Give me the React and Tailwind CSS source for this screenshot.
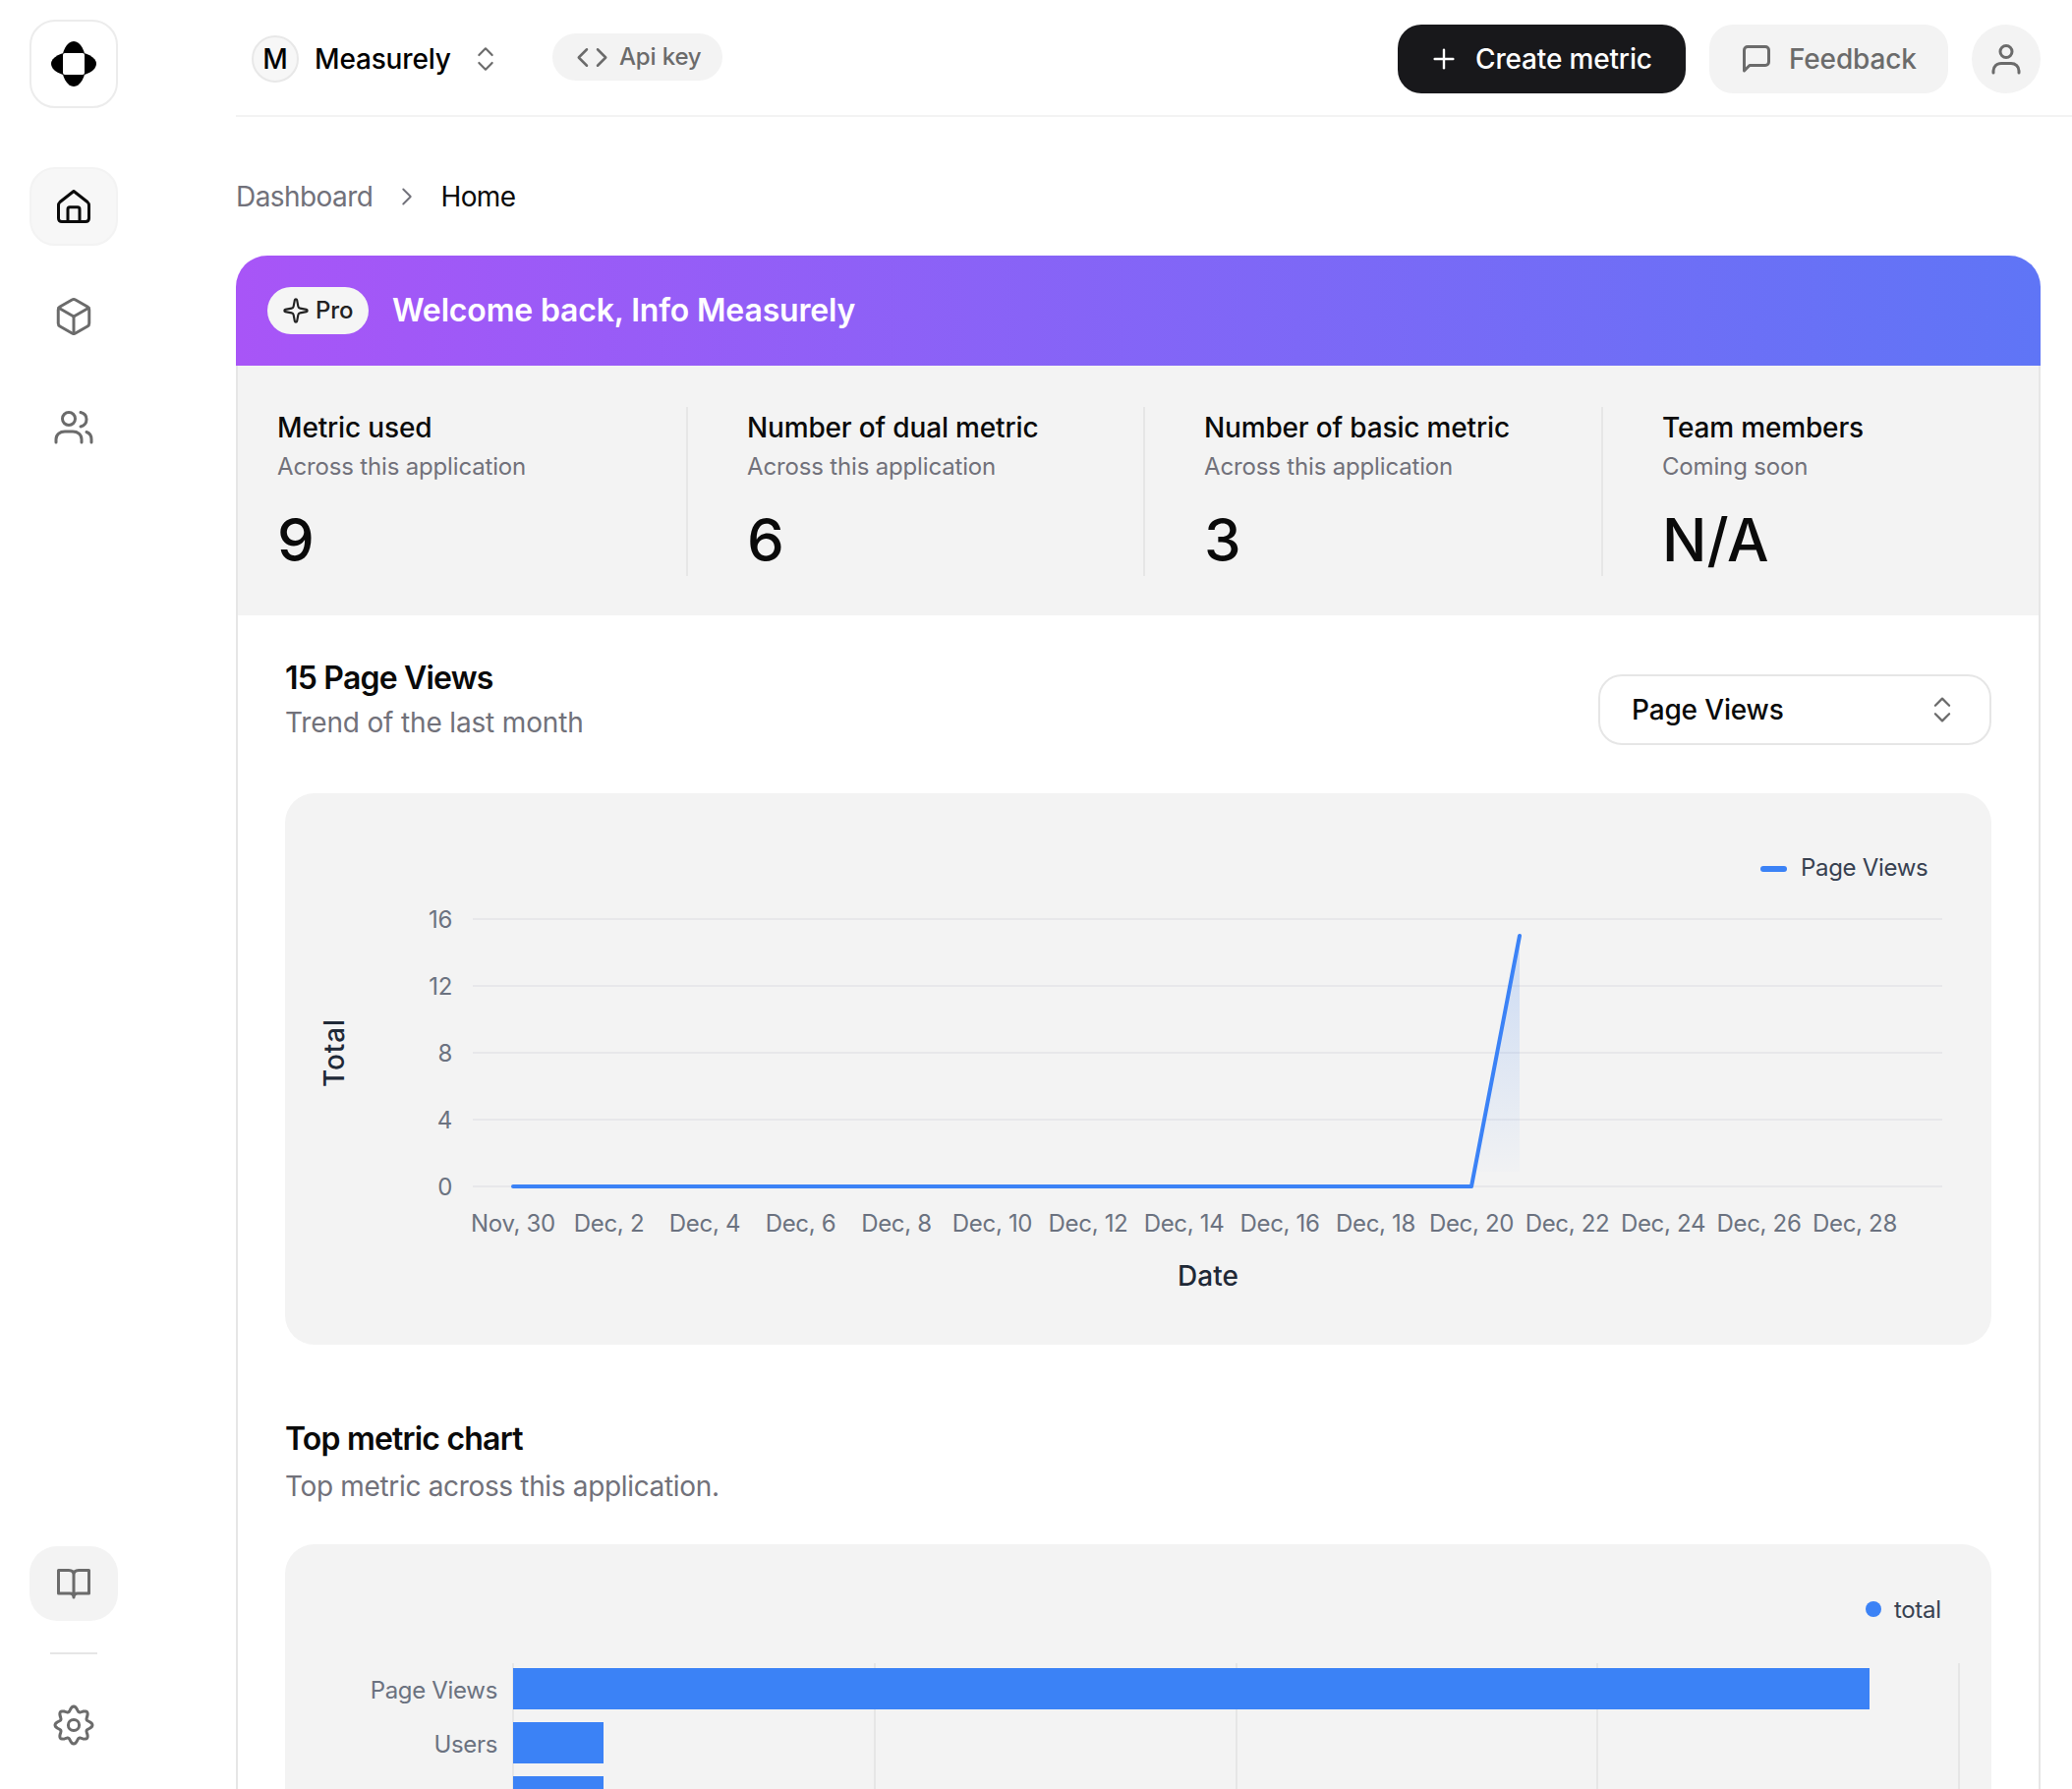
import { Box, ChevronRight, ChevronsUpDown, Code, Plus, Sparkle } from 'lucide-react'

const ticks = ['Nov, 30', 'Dec, 2', 'Dec, 4', 'Dec, 6', 'Dec, 8', 'Dec, 10', 'Dec, 12', 'Dec, 14', 'Dec, 16', 'Dec, 18', 'Dec, 20', 'Dec, 22', 'Dec, 24', 'Dec, 26', 'Dec, 28']
const yTicks = [['16', 128], ['12', 196], ['8', 264], ['4', 332], ['0', 400]]

const stats = [
  { title: 'Metric used', sub: 'Across this application', value: '9', cell: 'pl-[40px] border-r-2' },
  { title: 'Number of dual metric', sub: 'Across this application', value: '6', cell: 'pl-[60px] border-r-2' },
  { title: 'Number of basic metric', sub: 'Across this application', value: '3', cell: 'pl-[60px] border-r-2' },
  { title: 'Team members', sub: 'Coming soon', value: 'N/A', cell: 'pl-[60px]' },
]

// wavy eight-tooth cog outline
const gearPath = Array.from({ length: 145 }, (_, i) => {
  const t = (i / 144) * Math.PI * 2
  const r = 16.6 + 2.4 * Math.cos(8 * t)
  const x = 24 + r * Math.sin(t)
  const y = 24 - r * Math.cos(t)
  return `${i === 0 ? 'M' : 'L'}${x.toFixed(2)} ${y.toFixed(2)}`
}).join(' ')

function Logo() {
  return (
    <svg width="46" height="46" viewBox="0 0 46 46">
      <ellipse cx="23" cy="23" rx="12.5" ry="23" fill="#000" />
      <ellipse cx="23" cy="23" rx="23" ry="12.5" fill="#000" />
      <rect x="12" y="12" width="22" height="22" rx="2" fill="#fff" />
    </svg>
  )
}

function HomeIcon() {
  return (
    <svg width="36" height="36" viewBox="0 0 36 36" fill="none" stroke="currentColor" strokeWidth="3" strokeLinecap="round" strokeLinejoin="round">
      <path d="M18 2.5 L32 13.5 C33 14.4 33.5 15.5 33.5 17 V30 C33.5 32.3 32.3 33.5 30 33.5 H6 C3.7 33.5 2.5 32.3 2.5 30 V17 C2.5 15.5 3 14.4 4 13.5 Z" />
      <path d="M12 33.5 V21 C12 19.6 12.8 18.8 14 18.8 H22 C23.2 18.8 24 19.6 24 21 V33.5" />
    </svg>
  )
}

function TeamIcon() {
  return (
    <svg width="90" height="38" viewBox="0 0 90 38" fill="none" stroke="currentColor" strokeWidth="3" strokeLinecap="round">
      <circle cx="40" cy="11" r="6.5" />
      <path d="M52 4.5 C56 5.5 58 8.5 58 11.5 C58 15 56 18 52 19" />
      <path d="M27 35 V32 C27 27 31 24 36 24 H44 C49 24 53 27 53 32 V35" />
      <path d="M58 24.5 C61 25.5 63 28 63 32 V35" />
    </svg>
  )
}

function DocsIcon() {
  return (
    <svg width="90" height="40" viewBox="0 0 90 40" fill="none" stroke="currentColor" strokeWidth="3" strokeLinecap="round" strokeLinejoin="round">
      <path d="M45 11 C45 8 43 6.5 40 6.5 H29.5 V30 H41 C43.5 30 45 31.5 45 34 C45 31.5 46.5 30 49 30 H60.5 V6.5 H50 C47 6.5 45 8 45 11 V34" />
    </svg>
  )
}

function GearIcon() {
  return (
    <svg width="48" height="48" viewBox="0 0 48 48" fill="none" stroke="currentColor" strokeWidth="3" strokeLinejoin="round">
      <path d={`${gearPath} Z`} />
      <circle cx="24" cy="24" r="5.6" />
    </svg>
  )
}

function FeedbackIcon() {
  return (
    <svg width="28" height="28" viewBox="0 0 28 28" fill="none" stroke="currentColor" strokeWidth="3" strokeLinejoin="round" strokeLinecap="round">
      <path d="M1.5 26 V5 C1.5 3 3 1.5 5 1.5 H23 C25 1.5 26.5 3 26.5 5 V17 C26.5 19 25 20.5 23 20.5 H7 Z" />
    </svg>
  )
}

function UserIcon() {
  return (
    <svg width="30" height="32" viewBox="0 0 30 32" fill="none" stroke="currentColor" strokeWidth="3" strokeLinecap="round">
      <circle cx="15" cy="8.5" r="6" />
      <path d="M2 30 V28 C2 23.5 5.5 20.5 10 20.5 H20 C24.5 20.5 28 23.5 28 28 V30" />
    </svg>
  )
}

function Sidebar() {
  return (
    <aside className="w-[240px] shrink-0 flex flex-col pl-[30px] pt-[20px] pb-[27px]">
      <div className="w-[90px] h-[90px] rounded-[26px] border-2 border-[#ececec] flex items-center justify-center">
        <Logo />
      </div>
      <nav className="mt-[60px] flex flex-col gap-[32px]">
        <div className="w-[90px] h-[80px] rounded-[26px] border-2 border-[#f3f3f3] bg-[#f7f7f7] flex items-center justify-center text-[#0a0a0a]">
          <HomeIcon />
        </div>
        <div className="w-[90px] h-[80px] flex items-center justify-center text-[#6b6b6b]">
          <Box size={42} strokeWidth={1.7} />
        </div>
        <div className="w-[90px] h-[80px] flex items-center justify-center text-[#6b6b6b]">
          <TeamIcon />
        </div>
      </nav>
      <div className="mt-auto flex flex-col">
        <div className="w-[90px] h-[76px] rounded-[28px] bg-[#f3f3f3] flex items-center justify-center text-[#6b6b6b]">
          <DocsIcon />
        </div>
        <div className="w-[48px] h-[2px] bg-[#e6e6e6] ml-[21px] mt-[32px] mb-[34px]" />
        <div className="w-[90px] h-[76px] flex items-center justify-center text-[#6b6b6b]">
          <GearIcon />
        </div>
      </div>
    </aside>
  )
}

function Header() {
  return (
    <header className="h-[119px] shrink-0 border-b-2 border-[#f3f3f3] flex items-start pl-[16px] pr-[32px]">
      <div className="mt-[36px] w-[48px] h-[48px] rounded-full border-2 border-[#e8e8e8] bg-[#f7f7f7] flex items-center justify-center text-[28px] font-medium text-black">M</div>
      <span className="mt-[36px] ml-[16px] w-[138px] leading-[48px] text-[28px] font-medium text-black">Measurely</span>
      <ChevronsUpDown className="mt-[44px] ml-[20px] text-[#6b6b6b]" size={32} strokeWidth={1.6} />
      <div className="mt-[34px] ml-[52px] h-[48px] w-[173px] rounded-full bg-[#f3f3f3] flex items-center pl-[24px] gap-[11px] text-[#6b6b6b]">
        <Code size={33} strokeWidth={1.8} />
        <span className="text-[24px] leading-[32px] font-medium">Api key</span>
      </div>
      <div className="ml-auto mt-[25px] flex gap-[24px]">
        <div className="w-[293px] h-[70px] rounded-[24px] bg-[#18181b] text-white flex items-center pl-[31px] gap-[16px]">
          <Plus size={32} strokeWidth={1.8} />
          <span className="text-[28px] font-medium">Create metric</span>
        </div>
        <div className="w-[243px] h-[70px] rounded-[24px] bg-[#f3f3f3] text-[#6b6b6b] flex items-center pl-[34px] gap-[19px]">
          <FeedbackIcon />
          <span className="text-[28px] font-medium">Feedback</span>
        </div>
        <div className="w-[70px] h-[70px] rounded-full bg-[#f3f3f3] text-[#6b6b6b] flex items-center justify-center">
          <UserIcon />
        </div>
      </div>
    </header>
  )
}

function Stats() {
  return (
    <div className="h-[254px] bg-[#f3f3f3] pt-[42px] grid grid-cols-[458px_465px_466px_1fr]">
      {stats.map((s) => (
        <div key={s.title} className={`h-[172px] border-[#e6e6e6] ${s.cell}`}>
          <div className="text-[28px] leading-[42px] font-medium text-[#0a0a0a]">{s.title}</div>
          <div className="text-[24px] leading-[38px] text-[#71717a]">{s.sub}</div>
          <div className="mt-[18px] text-[60px] leading-[75px] font-medium tracking-normal text-[#0a0a0a]">{s.value}</div>
        </div>
      ))}
    </div>
  )
}

function LineChart() {
  return (
    <svg width="1736" height="561" className="block font-['Inter',sans-serif] tracking-[-0.02em]">
      <defs>
        <linearGradient id="fade" x1="0" y1="0" x2="0" y2="1">
          <stop offset="0%" stopColor="#3b82f6" stopOpacity="0.22" />
          <stop offset="100%" stopColor="#3b82f6" stopOpacity="0" />
        </linearGradient>
      </defs>
      <rect x="1501" y="74" width="27" height="6" rx="3" fill="#3b82f6" />
      <text x="1542" y="84" fontSize="24" fill="#374151">Page Views</text>
      {yTicks.map(([label, y]) => (
        <g key={label}>
          <line x1="191" x2="1686" y1={y} y2={y} stroke="#e7e7ea" strokeWidth="2" />
          <text x="170" y={y + 9} textAnchor="end" fontSize="24" fill="#6b7280">{label}</text>
        </g>
      ))}
      {ticks.map((t, i) => (
        <text key={t} x={232 + i * 97.5} y="446" textAnchor="middle" fontSize="24" fill="#6b7280">{t}</text>
      ))}
      <text transform="translate(60 264) rotate(-90)" textAnchor="middle" fontSize="28" fontWeight="500" letterSpacing="0.03em" fill="#1f2937">Total</text>
      <text x="939" y="501" textAnchor="middle" fontSize="28" fontWeight="500" letterSpacing="0" fill="#1f2937">Date</text>
      <path d="M1207 400 L1256 145 L1256 385 L1210 385 Z" fill="url(#fade)" />
      <polyline points="232,400 1207,400 1256,145" fill="none" stroke="#3b82f6" strokeWidth="4" strokeLinecap="round" strokeLinejoin="round" />
    </svg>
  )
}

function BarChart() {
  return (
    <svg width="1736" height="300" className="block font-['Inter',sans-serif] tracking-[-0.02em]">
      <circle cx="1616" cy="66" r="8" fill="#3b82f6" />
      <text x="1637" y="75" fontSize="24" fill="#374151">total</text>
      {[232, 600, 968, 1335, 1703].map((x) => (
        <line key={x} x1={x} x2={x} y1="121" y2="300" stroke="#e6e6e6" strokeWidth="2" />
      ))}
      <rect x="232" y="126" width="1380" height="42" fill="#3b82f6" />
      <rect x="232" y="181" width="92" height="42" fill="#3b82f6" />
      <rect x="232" y="236" width="92" height="42" fill="#3b82f6" />
      <text x="216" y="157" textAnchor="end" fontSize="24" fill="#6b7280">Page Views</text>
      <text x="216" y="212" textAnchor="end" fontSize="24" fill="#6b7280">Users</text>
      <text x="216" y="267" textAnchor="end" fontSize="24" fill="#6b7280">Feedback</text>
    </svg>
  )
}

export default function App() {
  return (
    <div className="h-screen overflow-hidden flex bg-white font-['Inter',sans-serif] tracking-[-0.01em]">
      <Sidebar />
      <main className="flex-1 min-w-0 flex flex-col">
        <Header />
        <div className="pr-[32px]">
          <div className="h-[101px] flex items-end text-[28px] leading-[40px] tracking-[-0.02em]">
            <span className="text-[#71717a]">Dashboard</span>
            <ChevronRight className="ml-[20px] mr-[19px] mb-[5px] text-[#71717a]" size={30} strokeWidth={1.5} />
            <span className="text-[#0a0a0a]">Home</span>
          </div>
          <div className="mt-[40px] h-[112px] rounded-t-[32px] bg-linear-to-r/srgb from-[#a855f7] to-[#5f75f6] flex items-center pl-[32px]">
            <div className="h-[48px] w-[103px] rounded-full bg-[#f5f5f5] flex items-center pl-[15px] gap-[6px] text-[#222]">
              <Sparkle size={28} strokeWidth={1.8} />
              <span className="text-[24px] font-medium">Pro</span>
            </div>
            <span className="ml-[24px] text-[32px] font-semibold text-white">Welcome back, Info Measurely</span>
          </div>
          <div className="border-x-2 border-[#e6e6e6] h-[1600px]">
            <Stats />
            <section className="px-[48px] pt-[40px]">
              <div className="flex justify-between">
                <div>
                  <h2 className="text-[32px] leading-[48px] font-semibold tracking-tight text-[#0a0a0a]">15 Page Views</h2>
                  <p className="mt-px text-[28px] leading-[40px] text-[#71717a]">Trend of the last month</p>
                </div>
                <div className="mt-[20px] w-[400px] h-[72px] rounded-[24px] border-2 border-[#e6e6e6] flex items-center justify-between pl-[32px] pr-[31px]">
                  <span className="text-[28px] font-medium text-[#0a0a0a]">Page Views</span>
                  <ChevronsUpDown size={34} strokeWidth={1.6} className="text-[#6b6b6b]" />
                </div>
              </div>
              <div className="mt-[49px] bg-[#f3f3f3] rounded-[30px]">
                <LineChart />
              </div>
              <h2 className="mt-[72px] text-[32px] leading-[48px] font-semibold tracking-tight text-[#0a0a0a]">Top metric chart</h2>
              <p className="mt-[4px] text-[28px] leading-[40px] tracking-[-0.012em] text-[#71717a]">Top metric across this application.</p>
              <div className="mt-[39px] bg-[#f3f3f3] rounded-[30px]">
                <BarChart />
              </div>
            </section>
          </div>
        </div>
      </main>
    </div>
  )
}
